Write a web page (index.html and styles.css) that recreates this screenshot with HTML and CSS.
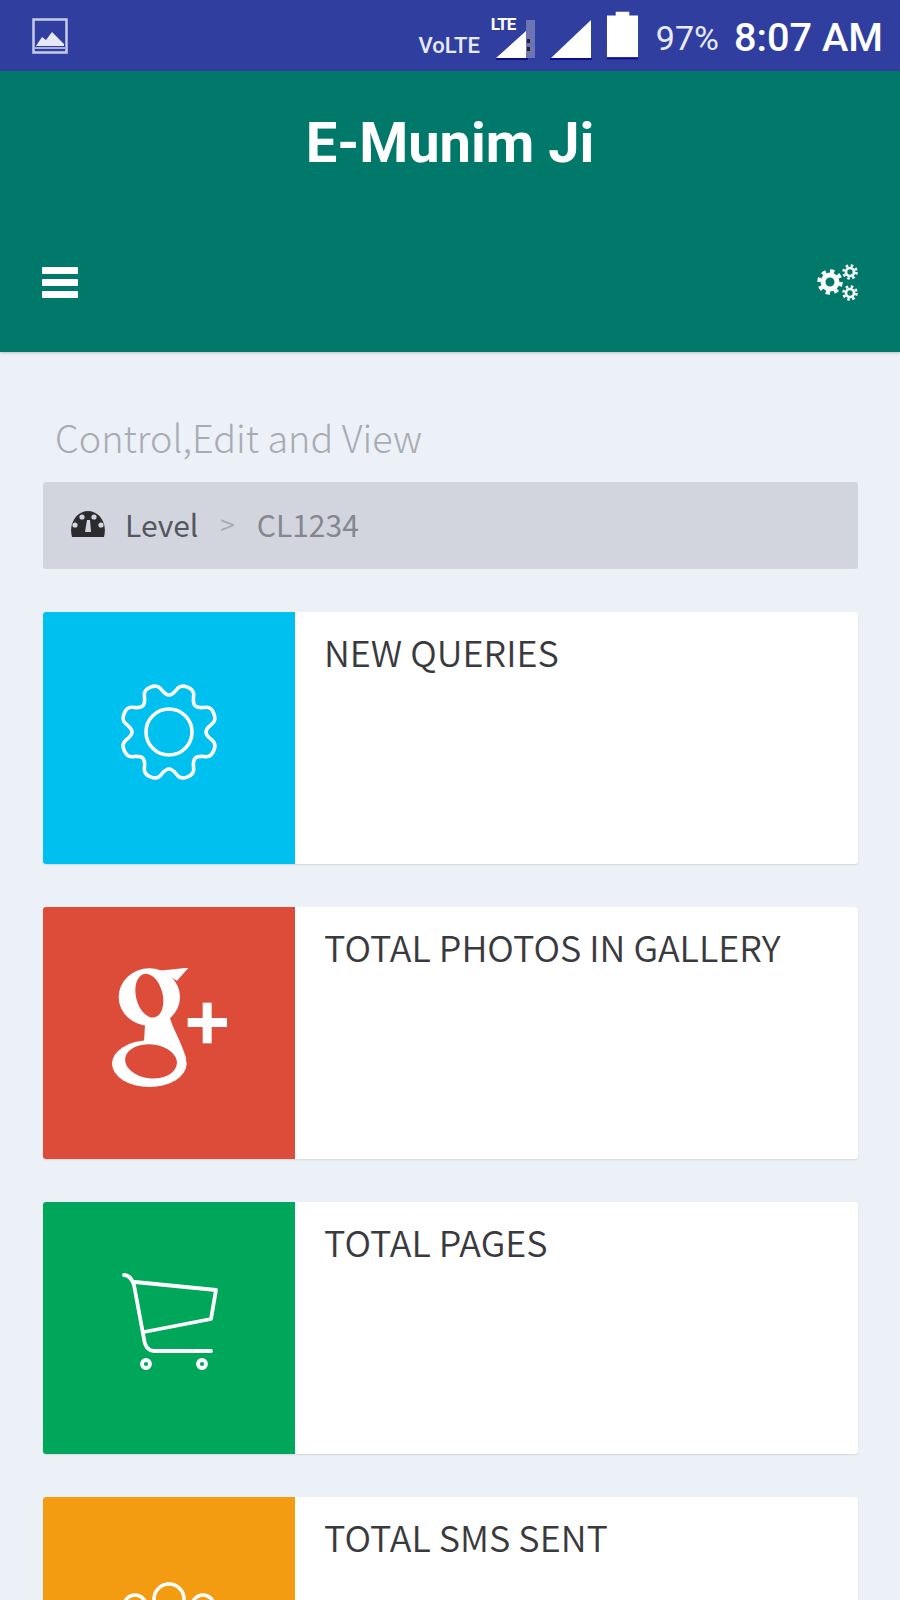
FILE: index.html
```html
<!DOCTYPE html>
<html lang="en">
<head>
    <meta charset="UTF-8">
    <meta name="viewport" content="width=device-width, initial-scale=1.0">
    <title>E-Munim Ji</title>
    <link rel="stylesheet" href="styles.css">
</head>
<body>
    <!-- Phone status bar -->
    <div class="status-bar">
        <svg class="status-photo" viewBox="0 0 36 36" width="36" height="36">
            <rect x="1.5" y="1.5" width="33" height="33" fill="none" stroke="#c8cbe6" stroke-width="2.5"/>
            <path d="M4 28 L10 19 L14 22 L20 14 L32 26 V28 Z" fill="#e6e8f5"/>
            <rect x="3" y="29" width="30" height="2" fill="#a9aed8"/>
        </svg>
        <div class="status-right">
            <span class="volte">VoLTE</span>
            <div class="lte-signal">
                <span class="lte">LTE</span>
                <svg viewBox="0 0 40 42" width="40" height="42">
                    <path d="M39 1 V39 H30 V1 Z" fill="#6d74b4"/>
                    <path d="M30 12 V39 H0 Z" fill="#fff"/>
                    <rect x="31" y="20" width="3" height="4" fill="#222"/>
                    <rect x="31" y="28" width="3" height="4" fill="#222"/>
                    <rect x="0" y="39" width="32" height="2" fill="#0b0f8c"/>
                </svg>
            </div>
            <svg class="signal" viewBox="0 0 42 42" width="42" height="42">
                <path d="M41 1 V39 H1 Z" fill="#fff"/>
                <rect x="0" y="39" width="42" height="2" fill="#0b0f8c"/>
            </svg>
            <svg class="battery" viewBox="0 0 34 50" width="33" height="50">
                <path d="M10 0 H24 V4 H33 V47 H1 V4 H10 Z" fill="#fff"/>
                <rect x="1" y="47" width="32" height="2" fill="#0b0f8c"/>
            </svg>
            <span class="percent">97%</span>
            <span class="clock">8:07 AM</span>
        </div>
    </div>

    <!-- App header -->
    <header class="app-header">
        <h1>E-Munim Ji</h1>
        <div class="toolbar">
            <div class="burger"><span></span><span></span><span></span></div>
            <svg class="cogs" viewBox="0 0 42 40" width="42" height="40">
                <g fill="none" stroke="#fff">
                    <circle cx="13" cy="20" r="7" stroke-width="5"/>
                    <circle cx="13" cy="20" r="11" stroke-width="3.5" stroke-dasharray="4.3 4.3"/>
                    <circle cx="33" cy="10" r="4" stroke-width="2.6"/>
                    <circle cx="33" cy="10" r="6.5" stroke-width="2.5" stroke-dasharray="2.55 2.55"/>
                    <circle cx="33" cy="31" r="4" stroke-width="2.6"/>
                    <circle cx="33" cy="31" r="6.5" stroke-width="2.5" stroke-dasharray="2.55 2.55"/>
                </g>
            </svg>
        </div>
    </header>

    <div class="content">
        <p class="page-title">Control,Edit and View</p>

        <div class="breadcrumb">
            <svg class="gauge" viewBox="0 0 36 28" width="36" height="28">
                <path d="M2 27 C-2 12 8 1 18 1 C28 1 38 12 34 27 Z" fill="#2c2c30"/>
                <g fill="#d2d5de">
                    <circle cx="12" cy="7" r="2.6"/>
                    <circle cx="24" cy="7" r="2.6"/>
                    <circle cx="5" cy="15" r="2.6"/>
                    <circle cx="31" cy="15" r="2.6"/>
                    <path d="M15 22 L17 10 L20 10 L21 22 Z"/>
                </g>
            </svg>
            <span class="crumb-level">Level</span>
            <span class="crumb-sep">&gt;</span>
            <span class="crumb-code">CL1234</span>
        </div>

        <div class="card">
            <div class="card-icon blue">
                <svg class="icon-raised" viewBox="0 0 100 100" width="100" height="100" fill="none" stroke="#fff" stroke-width="3.6">
                    <circle cx="50" cy="50" r="23"/>
                    <defs>
                        <path id="gear-tooth" d="M35.84 15.82 C39.5 14.3 40 10 41.5 6 C43 2 46 1.5 50 1.5 C54 1.5 57 2 58.5 6 C60 10 60.5 14.3 64.16 15.82"/>
                    </defs>
                    <use href="#gear-tooth" transform="rotate(22.5 50 50)"/>
                    <use href="#gear-tooth" transform="rotate(67.5 50 50)"/>
                    <use href="#gear-tooth" transform="rotate(112.5 50 50)"/>
                    <use href="#gear-tooth" transform="rotate(157.5 50 50)"/>
                    <use href="#gear-tooth" transform="rotate(202.5 50 50)"/>
                    <use href="#gear-tooth" transform="rotate(247.5 50 50)"/>
                    <use href="#gear-tooth" transform="rotate(292.5 50 50)"/>
                    <use href="#gear-tooth" transform="rotate(337.5 50 50)"/>
                </svg>
            </div>
            <div class="card-body">NEW QUERIES</div>
        </div>

        <div class="card">
            <div class="card-icon red">
                <!-- two stacked rings with a neck and ear, plus the cross -->
                <svg class="icon-raised" viewBox="245 198 345 357" width="115" height="119">
                    <ellipse cx="357" cy="285" rx="92" ry="86" fill="#fff"/>
                    <ellipse cx="357" cy="485" rx="112" ry="70" fill="#fff"/>
                    <path d="M345 350 L415 330 C420 370 450 410 468 470 L340 440 Z" fill="#fff"/>
                    <path d="M385 206 L475 197 L440 236 Z" fill="#fff"/>
                    <ellipse cx="357" cy="281" rx="40" ry="67" fill="#dd4b39" transform="rotate(-14 357 281)"/>
                    <ellipse cx="362" cy="478" rx="78" ry="51" fill="#dd4b39" transform="rotate(6 362 478)"/>
                    <rect x="517" y="302" width="27" height="122" fill="#fff"/>
                    <rect x="472" y="348" width="118" height="27" fill="#fff"/>
                </svg>
            </div>
            <div class="card-body">TOTAL PHOTOS IN GALLERY</div>
        </div>

        <div class="card">
            <div class="card-icon green">
                <svg class="icon-raised" viewBox="0 0 100 100" width="100" height="100" fill="none" stroke="#fff" stroke-width="3.8" stroke-linecap="round" stroke-linejoin="round">
                    <path d="M5 3 C10 3 13 7 15 13 L25 67 C26 76 31 79 35 79 H92"/>
                    <path d="M16 10 L97 18 L92 47 L25 60"/>
                    <circle cx="27" cy="92" r="4"/>
                    <circle cx="83" cy="92" r="4"/>
                </svg>
            </div>
            <div class="card-body">TOTAL PAGES</div>
        </div>

        <div class="card">
            <div class="card-icon orange">
                <svg viewBox="0 0 100 100" width="100" height="100" fill="none" stroke="#fff" stroke-width="3.5">
                    <circle cx="50" cy="26" r="15"/>
                    <circle cx="16" cy="33" r="11"/>
                    <circle cx="84" cy="33" r="11"/>
                </svg>
            </div>
            <div class="card-body">TOTAL SMS SENT</div>
        </div>
    </div>
</body>
</html>
```

FILE: styles.css
```css
html, body {
    height: 1600px;
    overflow: hidden;
}

body {
    font-family: "Noto Sans CJK SC", "Noto Sans", sans-serif;
    background-color: #ecf0f7;
    margin: 0;
    padding: 0;
    color: #444;
}

.status-bar {
    height: 71px;
    background-color: #303f9f;
    display: flex;
    align-items: center;
    justify-content: space-between;
    padding: 0 17px 0 32px;
    color: #fff;
    font-family: Roboto, sans-serif;
}

.status-right {
    display: flex;
    align-items: flex-end;
    height: 50px;
}

.volte {
    font-size: 22px;
    font-weight: 500;
    line-height: 22px;
    margin-bottom: 4px;
    margin-right: 16px;
    color: #e9eaf6;
}

.lte-signal {
    position: relative;
    width: 40px;
    height: 42px;
    margin-right: 14px;
}

.lte-signal svg {
    display: block;
}

.lte {
    position: absolute;
    left: -5px;
    top: -3px;
    font-size: 17px;
    line-height: 17px;
    font-weight: 700;
    letter-spacing: -1px;
}

.signal {
    margin-right: 14px;
}

.battery {
    margin-right: 17px;
}

.percent {
    font-size: 34px;
    margin-right: 15px;
    color: #e9eaf6;
    line-height: 46px;
}

.clock {
    font-size: 39.7px;
    font-weight: 500;
    line-height: 46px;
}

.app-header {
    height: 281px;
    background-color: #00796b;
    box-shadow: 0 1px 3px rgba(0, 0, 0, 0.2);
    display: flex;
    flex-direction: column;
    justify-content: space-between;
    color: #fff;
}

.app-header h1 {
    margin: 43px 0 0;
    text-align: center;
    font-family: Roboto, sans-serif;
    font-size: 56px;
    font-weight: 700;
    line-height: 58px;
}

.toolbar {
    display: flex;
    align-items: center;
    justify-content: space-between;
    padding: 0 41px 50px 42px;
}

.burger {
    width: 36px;
}

.burger span {
    display: block;
    height: 7px;
    margin-bottom: 5px;
    border-radius: 1px;
    background-color: #fff;
}

.burger span:last-child {
    margin-bottom: 0;
}

.content {
    padding: 0 42px 0 43px;
}

.page-title {
    margin: 0 0 0 12px;
    padding-top: 60px;
    height: 70px;
    font-size: 37.8px;
    font-weight: 300;
    line-height: 50px;
    color: #a8abb2;
}

.breadcrumb {
    height: 83px;
    padding: 0 0 4px 27px;
    background-color: #d2d5de;
    border-radius: 3px;
    display: flex;
    align-items: center;
    font-size: 30px;
}

.gauge {
    margin-right: 19px;
}

.crumb-level {
    color: #55575e;
}

.crumb-sep {
    margin: 0 22px;
    color: #a8abb2;
    font-size: 26px;
}

.crumb-code {
    color: #85878e;
}

.card {
    height: 252px;
    margin-top: 43px;
    background-color: #fff;
    border-radius: 3px;
    display: flex;
    box-shadow: 0 1px 2px rgba(0, 0, 0, 0.1);
    overflow: hidden;
}

.card-icon {
    width: 252px;
    display: flex;
    align-items: center;
    justify-content: center;
    flex-shrink: 0;
}

.icon-raised {
    margin-bottom: 12px;
}

.card-icon.blue {
    background-color: #00c0ef;
}

.card-icon.red {
    background-color: #dd4b39;
}

.card-icon.green {
    background-color: #00a65a;
}

.card-icon.orange {
    background-color: #f39c12;
}

.card-body {
    padding: 14px 0 0 29px;
    font-size: 36px;
    font-weight: 350;
    line-height: 50px;
    color: #3a3a3e;
}
```
